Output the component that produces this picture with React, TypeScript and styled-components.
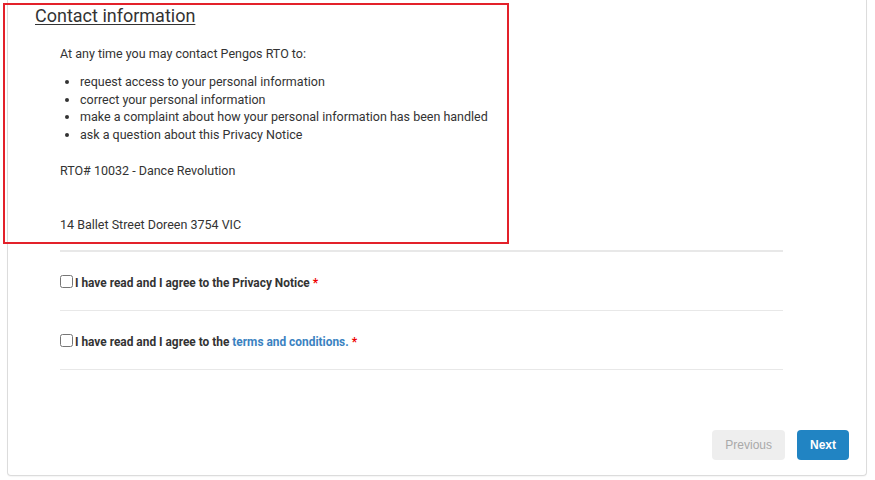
import React from "react";
import styled, { createGlobalStyle } from "styled-components";

const GlobalStyle = createGlobalStyle`
  html, body { margin: 0; padding: 0; background: #ffffff; }
  body { font-family: Roboto, "Liberation Sans", Arial, sans-serif; color: #333333; }
`;

const Page = styled.div`
  position: relative;
  width: 875px;
  height: 480px;
  padding: 0 8px 0 7px;
  box-sizing: border-box;
  overflow: hidden;
`;

const Card = styled.div`
  display: flex;
  flex-direction: column;
  height: 476px;
  box-sizing: border-box;
  border: 1px solid #dcdcdc;
  border-top: none;
  border-radius: 0 0 4px 4px;
  box-shadow: 0 1px 1px rgba(0, 0, 0, 0.04);
  background: #ffffff;
`;

const Heading = styled.h2`
  margin: 5px 0 0 27px;
  font-family: Roboto, sans-serif;
  font-weight: 400;
  font-size: 18px;
  line-height: 22px;
  color: #333333;
  text-decoration: underline;
  text-underline-offset: 2px;
  text-decoration-thickness: 1px;
`;

const Body = styled.div`
  margin-left: 52px;
  width: 723px;
  display: flex;
  flex-direction: column;
`;

const Para = styled.p<{ $top: number }>`
  margin: ${(p) => p.$top}px 0 0 0;
  font-family: Roboto, sans-serif;
  font-size: 12.5px;
  line-height: 18px;
  color: #333333;
`;

const List = styled.ul`
  margin: 10px 0 0 0;
  padding-left: 20px;
  font-family: Roboto, sans-serif;
  font-size: 12.5px;
  line-height: 17.5px;
  color: #333333;
`;

const Rule = styled.div<{ $top?: number }>`
  margin-top: ${(p) => p.$top ?? 0}px;
  border-top: 1px solid #e8e8e8;
`;

const CheckRow = styled.div`
  display: flex;
  align-items: flex-start;
  padding: 22px 0 18px 0;
  border-top: 1px solid #e8e8e8;
  &:first-of-type { border-top: none; }
`;

const Box = styled.input`
  width: 13px;
  height: 13px;
  margin: 1px 2px 0 0;
  flex: none;
`;

const Label = styled.label`
  font-family: Roboto, sans-serif;
  font-weight: 700;
  font-size: 11.9px;
  line-height: 18px;
  color: #333333;
`;

const Link = styled.a`
  color: #3a82c1;
  text-decoration: none;
`;

const Req = styled.span`
  color: #ee0000;
  margin-left: 3px;
`;

const Footer = styled.div`
  margin-top: auto;
  display: flex;
  justify-content: flex-end;
  gap: 12px;
  padding: 0 17px 15px 0;
`;

const Button = styled.button<{ $primary?: boolean }>`
  height: 30px;
  padding: 0 13px;
  border: none;
  border-radius: 4px;
  font-family: "Liberation Sans", Arial, sans-serif;
  font-size: 12px;
  font-weight: ${(p) => (p.$primary ? 700 : 400)};
  background: ${(p) => (p.$primary ? "#2184c3" : "#eeeeee")};
  color: ${(p) => (p.$primary ? "#ffffff" : "#a9a9a9")};
  cursor: pointer;
`;

const Highlight = styled.div`
  position: absolute;
  left: 3px;
  top: 3px;
  width: 506px;
  height: 241px;
  box-sizing: border-box;
  border: 2px solid #e3212a;
  pointer-events: none;
`;

export default function App() {
  return (
    <>
      <GlobalStyle />
      <Page>
        <Card>
          <Heading>Contact information</Heading>
          <Body>
            <Para $top={18}>At any time you may contact Pengos RTO to:</Para>
            <List>
              <li>request access to your personal information</li>
              <li>correct your personal information</li>
              <li>make a complaint about how your personal information has been handled</li>
              <li>ask a question about this Privacy Notice</li>
            </List>
            <Para $top={19}>RTO# 10032 - Dance Revolution</Para>
            <Para $top={36}>14 Ballet Street Doreen 3754 VIC</Para>
            <Rule $top={16} />
            <CheckRow>
              <Box type="checkbox" id="privacy" />
              <Label htmlFor="privacy">
                I have read and I agree to the Privacy Notice<Req>*</Req>
              </Label>
            </CheckRow>
            <CheckRow>
              <Box type="checkbox" id="terms" />
              <Label htmlFor="terms">
                I have read and I agree to the <Link href="#">terms and conditions.</Link>
                <Req>*</Req>
              </Label>
            </CheckRow>
            <Rule />
          </Body>
          <Footer>
            <Button>Previous</Button>
            <Button $primary>Next</Button>
          </Footer>
        </Card>
        <Highlight />
      </Page>
    </>
  );
}
